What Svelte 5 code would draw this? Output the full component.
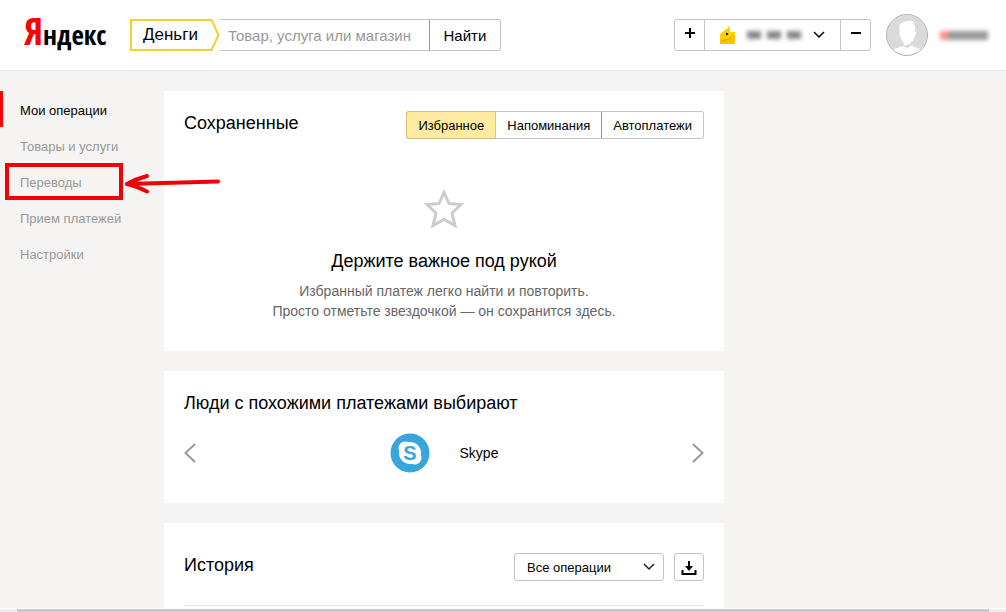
<script>
	let query = $state('');
	let tab = $state('fav');
	let filter = $state('all');

	const menu = [
		{ title: 'Мои операции', active: true },
		{ title: 'Товары и услуги' },
		{ title: 'Переводы', marked: true },
		{ title: 'Прием платежей' },
		{ title: 'Настройки' }
	];

	const tabs = [
		{ id: 'fav', title: 'Избранное' },
		{ id: 'remind', title: 'Напоминания' },
		{ id: 'auto', title: 'Автоплатежи' }
	];
</script>

<div class="page">
	<header>
		<a class="logo" href="#home"><span>Я</span>ндекс</a>

		<form class="search" onsubmit={(e) => e.preventDefault()}>
			<a class="service" href="#money">Деньги</a>
			<svg class="corner" width="10" height="32" viewBox="0 0 10 32">
				<path d="M0 1H1.5L8.5 16L1.5 31H0" fill="#fff" stroke="#f5cf2d" stroke-width="2" />
			</svg>
			<input type="text" bind:value={query} placeholder="Товар, услуга или магазин" aria-label="Поиск" />
			<button type="submit">Найти</button>
		</form>

		<div class="account">
			<button class="small" aria-label="Пополнить">
				<svg width="12" height="12" viewBox="0 0 12 12"><path d="M6 1V11M1 6H11" stroke="#000" stroke-width="2" /></svg>
			</button>
			<button class="balance" aria-label="Баланс">
				<svg width="15" height="18" viewBox="0 0 15 18">
					<path d="M0 8L10 0V6H15V18H0Z" fill="#ffd000" />
					<path d="M4 12L10 13L15 8V15L12 18H0V15Z" fill="#f8c300" />
					<path d="M0 15L9 12.500L13 8L10 13L4 15Z" fill="#d9a400" />
					<circle cx="7" cy="8" r="1.300" fill="#222" />
				</svg>
				<span class="sum"><i></i><i></i><i></i></span>
				<svg width="12" height="8" viewBox="0 0 12 8"><path d="M1 1L6 6L11 1" fill="none" stroke="#000" stroke-width="1.500" /></svg>
			</button>
			<button class="small" aria-label="Снять">
				<svg width="12" height="12" viewBox="0 0 12 12"><path d="M1 6H11" stroke="#000" stroke-width="2" /></svg>
			</button>
		</div>

		<a class="user" href="#user" aria-label="Профиль">
			<svg width="42" height="42" viewBox="0 0 42 42">
				<defs><clipPath id="round"><circle cx="21" cy="21" r="20" /></clipPath></defs>
				<circle cx="21" cy="21" r="20" fill="#dadada" />
				<path clip-path="url(#round)" fill="#fff" d="M14 18L13 12L15 9L18 8L21 7L28 7L27 9L29 12L29 17L30 19L28.500 23L27 27L24 30L20 31L19 32L22 33L26 31L28 33L34 35L38 38V42H4V38L8 35L14 33L17 32L17.500 28L15.500 26L14.500 23L13 20Z" />
				<path d="M17.500 28L18 31L20 32.500L24 30L26 28L26 31L22 34L17 32.500Z" fill="#dadada" />
				<circle cx="21" cy="21" r="20.500" fill="none" stroke="#b0b0b0" />
			</svg>
			<span class="login"><i></i><i></i></span>
		</a>
	</header>

	<div class="body">
		<nav>
			{#each menu as item}
				<a href="#menu" class:active={item.active} class:marked={item.marked}>
					{item.title}
					{#if item.marked}
						<svg class="pointer" width="98" height="22" viewBox="0 0 98 22">
							<path d="M3 12L94 9.500M23 4Q12 7 3 12Q12 14 23 19.500" fill="none" stroke="#f00008" stroke-width="4" stroke-linecap="round" stroke-linejoin="round" />
						</svg>
					{/if}
				</a>
			{/each}
		</nav>

		<main>
			<section class="saved">
				<div class="head">
					<h2>Сохраненные</h2>
					<div class="tabs">
						{#each tabs as t}
							<button class:on={tab === t.id} onclick={() => (tab = t.id)}>{t.title}</button>
						{/each}
					</div>
				</div>
				<div class="empty">
					<svg width="40" height="40" viewBox="0 0 40 40">
						<path d="M20 3.500L25 14.500L37 15.500L28 24L31 36.500L20 30.500L9 36.500L12 24L3 15.500L15 14.500Z" fill="none" stroke="#ccc" stroke-width="3" />
					</svg>
					<h3>Держите важное под рукой</h3>
					<p>Избранный платеж легко найти и повторить.<br />Просто отметьте звездочкой — он сохранится здесь.</p>
				</div>
			</section>

			<section class="similar">
				<h2>Люди с похожими платежами выбирают</h2>
				<div class="slider">
					<button aria-label="Назад">
						<svg width="12" height="20" viewBox="0 0 12 20"><path d="M11 1L1.500 10L11 19" fill="none" stroke="#999" stroke-width="2" /></svg>
					</button>
					<a href="#skype">
						<svg width="40" height="40" viewBox="0 0 40 40">
							<circle cx="20" cy="20" r="19.500" fill="#37a6de" />
							<circle cx="20" cy="20" r="11" fill="#fff" />
							<circle cx="15" cy="15" r="6.500" fill="#fff" />
							<circle cx="25" cy="25" r="6.500" fill="#fff" />
							<text x="20" y="27" text-anchor="middle">S</text>
						</svg>
						<span>Skype</span>
					</a>
					<button aria-label="Вперед">
						<svg width="12" height="20" viewBox="0 0 12 20"><path d="M1 1L10.500 10L1 19" fill="none" stroke="#999" stroke-width="2" /></svg>
					</button>
				</div>
			</section>

			<section class="history">
				<div class="head">
					<h2>История</h2>
					<div class="tools">
						<div class="select">
							<select bind:value={filter} aria-label="Фильтр операций">
								<option value="all">Все операции</option>
								<option value="in">Пополнения</option>
								<option value="out">Расходы</option>
							</select>
							<svg width="12" height="8" viewBox="0 0 12 8"><path d="M1 1L6 6L11 1" fill="none" stroke="#222" stroke-width="1.500" /></svg>
						</div>
						<button class="download" aria-label="Скачать">
							<svg width="16" height="16" viewBox="0 0 16 16">
								<path d="M1.500 11V15H14.500V11" fill="none" stroke="#000" stroke-width="2" />
								<path d="M7 2H9V7H12L8 12L4 7H7Z" />
							</svg>
						</button>
					</div>
				</div>
				<hr />
			</section>
		</main>
	</div>

	<div class="scroll"><div></div></div>
</div>

<style>
	:global(body) {
		margin: 0;
		background: #f5f4f2;
	}

	.page {
		display: flex;
		flex-direction: column;
		min-height: 100vh;
		font-family: "Liberation Sans", Arial, sans-serif;
		font-size: 13px;
		color: #000;
	}

	button, input, select {
		font: inherit;
		color: inherit;
		margin: 0;
		box-sizing: border-box;
	}
	button {
		display: flex;
		align-items: center;
		justify-content: center;
		padding: 0;
		background: #fff;
		border: 1px solid #c4c4c4;
		cursor: pointer;
	}
	a {
		color: inherit;
		text-decoration: none;
	}
	svg {
		display: block;
		flex: none;
	}
	h2, h3, p {
		margin: 0;
		font-weight: 400;
	}
	h2 {
		font-size: 18px;
		line-height: 24px;
	}

	header {
		display: flex;
		align-items: center;
		height: 70px;
		padding: 0 16px 0 24px;
		background: #fff;
		border-bottom: 1px solid #e9e8e6;
	}
	.logo {
		width: 106px;
		padding-bottom: 6px;
		font-family: "Open Sans Condensed", "Open Sans Condensed Light", "Liberation Sans Narrow", sans-serif;
		font-weight: 300;
		font-size: 27px;
		line-height: 40px;
	}
	.logo span {
		font-size: 38px;
		color: #f00;
	}

	.search {
		display: flex;
		height: 32px;
		font-size: 15px;
	}
	.service {
		box-sizing: border-box;
		padding: 0 12px 0 11px;
		border: 2px solid #f5cf2d;
		border-right: 0;
		font-size: 17px;
		line-height: 28px;
	}
	.corner {
		z-index: 1;
	}
	.search input {
		width: 209px;
		padding: 0 8px;
		border: solid #c4c4c4;
		border-width: 1px 0;
		outline: 0;
	}
	.search input::placeholder {
		color: #999;
		opacity: 1;
	}
	.search button {
		width: 72px;
		border-left-color: #999;
		border-radius: 0 3px 3px 0;
	}

	.account {
		display: flex;
		height: 32px;
		margin-left: auto;
	}
	.small {
		width: 31px;
		padding-bottom: 4px;
	}
	.small:first-child {
		border-radius: 3px 0 0 3px;
	}
	.small:last-child {
		border-radius: 0 3px 3px 0;
	}
	.balance {
		width: 135px;
		gap: 12px;
		border-width: 1px 0;
	}
	.sum {
		display: flex;
		gap: 6px;
		width: 54px;
		filter: blur(2px);
	}
	.sum i {
		flex: 1;
		height: 8px;
		background: #888;
	}
	.user {
		display: flex;
		align-items: center;
		gap: 12px;
		margin-left: 15px;
	}
	.login {
		display: flex;
		width: 50px;
		filter: blur(2px);
	}
	.login i {
		width: 40px;
		height: 9px;
		background: #999;
	}
	.login i:first-child {
		width: 8px;
		background: #ff8a8a;
	}

	.body {
		display: flex;
		flex: 1;
		padding-top: 20px;
	}
	nav {
		width: 164px;
	}
	nav a {
		display: block;
		height: 36px;
		padding-left: 20px;
		line-height: 40px;
		color: #999;
	}
	nav .active {
		padding-left: 17px;
		border-left: 3px solid #f00;
		color: #000;
	}
	nav .marked {
		position: relative;
	}
	.marked::before {
		content: '';
		position: absolute;
		top: 0;
		left: 5px;
		box-sizing: border-box;
		width: 118px;
		height: 37px;
		border: 4px solid #f00008;
	}
	.pointer {
		position: absolute;
		top: 9px;
		left: 124px;
	}

	main {
		display: flex;
		flex-direction: column;
		gap: 20px;
		width: 560px;
	}
	section {
		padding: 20px;
		background: #fff;
	}
	section:last-child {
		flex: 1;
	}
	.head {
		display: flex;
		align-items: flex-start;
		justify-content: space-between;
	}
	.tabs {
		display: flex;
	}
	.tabs button {
		height: 28px;
		padding: 0 11px;
		border-right-width: 0;
	}
	.tabs button:first-child {
		border-radius: 3px 0 0 3px;
	}
	.tabs button:last-child {
		border-right-width: 1px;
		border-left-color: #999;
		border-radius: 0 3px 3px 0;
	}
	.tabs .on {
		background: #ffeba0;
		border-color: #d0bf80;
	}
	.empty {
		display: flex;
		flex-direction: column;
		align-items: center;
		padding: 50px 0 10px;
		text-align: center;
	}
	h3 {
		margin: 20px 0 8px;
		font-size: 18px;
		line-height: 24px;
	}
	.empty p {
		font-size: 14px;
		line-height: 20px;
		color: #666;
	}

	.slider {
		display: flex;
		align-items: center;
		justify-content: space-between;
		padding: 18px 0 10px;
	}
	.slider button {
		border: 0;
	}
	.slider a {
		display: flex;
		align-items: center;
		gap: 30px;
		font-size: 14px;
	}
	.slider text {
		font-size: 20px;
		font-weight: 700;
		fill: #37a6de;
	}

	.history {
		padding: 30px 20px 2px;
	}
	.tools {
		display: flex;
		gap: 10px;
	}
	.select {
		display: flex;
		align-items: center;
		position: relative;
	}
	.select select {
		width: 150px;
		height: 28px;
		padding: 0 12px;
		appearance: none;
		background: #fff;
		border: 1px solid #c4c4c4;
		border-radius: 3px;
	}
	.select svg {
		position: absolute;
		right: 9px;
		pointer-events: none;
	}
	.download {
		width: 30px;
		height: 28px;
		border-radius: 3px;
	}
	hr {
		margin: 24px 0 0;
		border: 0;
		border-top: 1px solid #e4e4e4;
	}

	.scroll {
		padding: 0 17px;
		background: #f0f0f0;
		border-top: 1px solid #fff;
	}
	.scroll div {
		height: 3px;
		background: #c9c9c9;
	}
</style>
